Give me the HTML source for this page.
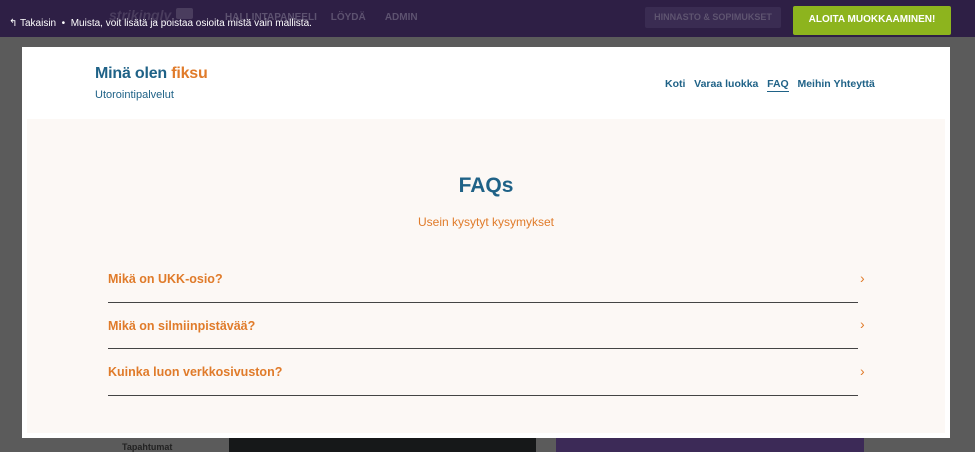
<!DOCTYPE html>
<html><head><meta charset="utf-8"><style>
*{margin:0;padding:0;box-sizing:border-box}
body{width:975px;height:452px;background:#5b5b5b;font-family:"Liberation Sans",sans-serif;position:relative;overflow:hidden}
.top{position:absolute;left:0;top:0;width:975px;height:37px;background:#2e1f45}
.abs{position:absolute;white-space:nowrap}
.card{position:absolute;left:22px;top:47px;width:928px;height:391px;background:#fff}
.cream{position:absolute;left:5px;top:72px;width:918px;height:314px;background:#fcf8f5}
.q{position:absolute;left:81px;font-weight:bold;color:#e07b2a;font-size:12.5px}
.line{position:absolute;left:81px;width:750px;height:1px;background:#444}
.ch{position:absolute;left:833px;color:#e07b2a;font-size:14px}
</style></head><body>
<div class="top"></div>
<div class="abs" style="left:109px;top:7px;color:#4a3d5e;font-style:italic;font-weight:bold;font-size:14px">strikingly</div>
<div class="abs" style="left:176px;top:8px;width:17px;height:11px;background:#4a3d5e;border-radius:2px"></div>
<div class="abs" style="left:225px;top:12px;color:#5d5270;font-size:10px;font-weight:bold">HALLINTAPANEELI &nbsp; &nbsp; LÖYDÄ &nbsp; &nbsp; &nbsp; ADMIN</div>
<div class="abs" style="left:9px;top:18px;color:#fff;font-size:10px">↰ Takaisin &nbsp;•&nbsp; Muista, voit lisätä ja poistaa osioita mistä vain mallista.</div>
<div class="abs" style="left:645px;top:7px;width:136px;height:21px;background:#3a2c52;border-radius:2px;color:#5e5470;font-size:9px;font-weight:bold;text-align:center;line-height:21px">HINNASTO &amp; SOPIMUKSET</div>
<div class="abs" style="left:793px;top:6px;width:158px;height:29px;background:#8db41e;border-radius:2px;color:#fff;font-size:10px;font-weight:bold;text-align:center;line-height:27px">ALOITA MUOKKAAMINEN!</div>
<div class="card">
<div class="abs" style="left:73px;top:18px;font-size:16px;font-weight:bold;color:#1f6287;letter-spacing:-0.2px">Minä olen <span style="color:#e07b2a">fiksu</span></div>
<div class="abs" style="left:73px;top:42px;font-size:11px;color:#1f6287">Utorointipalvelut</div>
<div class="abs" style="left:643px;top:31px;font-size:10.5px;font-weight:bold;color:#1f6287">Koti &nbsp; Varaa luokka &nbsp; <span style="border-bottom:1px solid #1f6287;padding-bottom:1px">FAQ</span> &nbsp; Meihin Yhteyttä</div>
<div class="cream">
<div class="abs" style="left:0;width:918px;top:55px;text-align:center;font-size:21px;font-weight:bold;color:#1f6287">FAQs</div>
<div class="abs" style="left:0;width:918px;top:96px;text-align:center;font-size:12px;color:#e07b2a">Usein kysytyt kysymykset</div>
<div class="q" style="top:153px">Mikä on UKK-osio?</div><div class="ch" style="top:151px">›</div><div class="line" style="top:183px"></div>
<div class="q" style="top:200px">Mikä on silmiinpistävää?</div><div class="ch" style="top:197px">›</div><div class="line" style="top:229px"></div>
<div class="q" style="top:246px">Kuinka luon verkkosivuston?</div><div class="ch" style="top:244px">›</div><div class="line" style="top:276px"></div>
</div>
</div>
<div class="abs" style="left:229px;top:438px;width:307px;height:14px;background:#161819"></div>
<div class="abs" style="left:556px;top:438px;width:308px;height:14px;background:#3c2a57"></div>
<div class="abs" style="left:122px;top:442px;font-size:9px;color:#222;font-weight:bold">Tapahtumat</div>
</body></html>
